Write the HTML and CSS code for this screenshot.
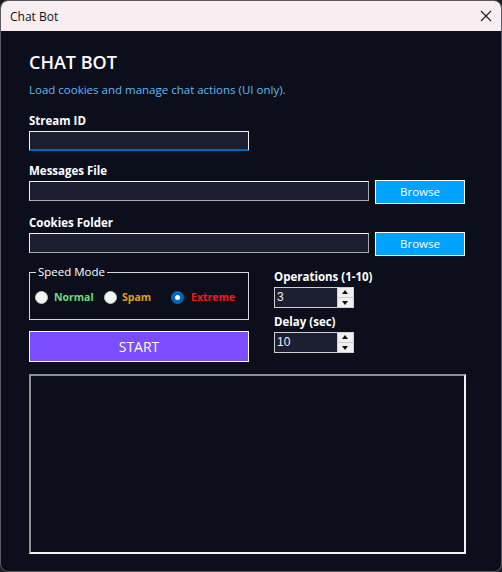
FILE: index.html
```html
<!DOCTYPE html>
<html>
<head>
<meta charset="utf-8">
<link rel="stylesheet" href="styles.css">
</head>
<body>
<div class="window">
  <div class="titlebar">
    <span class="title">Chat Bot</span>
    <svg class="close" width="12" height="12" viewBox="0 0 12 12"><path d="M1 1 L11 11 M11 1 L1 11" stroke="#1a1a1a" stroke-width="1.1" fill="none"/></svg>
  </div>
  <div class="content">
    <h1 class="heading">CHAT BOT</h1>
    <p class="subtitle">Load cookies and manage chat actions (UI only).</p>

    <label class="label first">Stream ID</label>
    <div class="input stream"></div>

    <label class="label">Messages File</label>
    <div class="row">
      <div class="input wide"></div>
      <div class="btn-browse">Browse</div>
    </div>

    <label class="label after-row">Cookies Folder</label>
    <div class="row">
      <div class="input wide"></div>
      <div class="btn-browse">Browse</div>
    </div>

    <div class="lower">
      <div class="leftcol">
        <fieldset class="group">
          <legend>Speed Mode</legend>
          <div class="radios">
            <div class="radio r1"><span class="dot"></span><span class="rl normal">Normal</span></div>
            <div class="radio r2"><span class="dot"></span><span class="rl spam">Spam</span></div>
            <div class="radio r3"><span class="dot on"></span><span class="rl extreme">Extreme</span></div>
          </div>
        </fieldset>
        <div class="start">START</div>
      </div>
      <div class="rightcol">
        <label class="label small">Operations (1-10)</label>
        <div class="spin"><span class="val">3</span><span class="arrows"><span class="up"></span><span class="down"></span></span></div>
        <label class="label small second">Delay (sec)</label>
        <div class="spin"><span class="val">10</span><span class="arrows"><span class="up"></span><span class="down"></span></span></div>
      </div>
    </div>

    <div class="log"></div>
  </div>
</div>
</body>
</html>
```
FILE: styles.css
```css
* { box-sizing: border-box; }
html, body { margin: 0; padding: 0; }
body {
  background: #1d1f26;
  width: 502px;
  height: 572px;
  overflow: hidden;
  font-family: "Open Sans", "Noto Sans", sans-serif;
}
.window {
  width: 502px;
  height: 572px;
  border: 1px solid #5a5a60;
  border-radius: 8px;
  overflow: hidden;
  background: #0c0f1b;
  display: flex;
  flex-direction: column;
}
.titlebar {
  height: 30px;
  background: #f8eef2;
  display: flex;
  align-items: center;
  justify-content: space-between;
  padding: 0 9px 0 9px;
  flex: none;
}
.title {
  font-size: 12px;
  color: #111;
}
.close { display: block; }
.content {
  flex: 1;
  padding: 19px 0 0 28px;
  display: flex;
  flex-direction: column;
  align-items: flex-start;
}
.heading {
  margin: 0;
  font-size: 18px;
  line-height: 24px;
  font-weight: 600;
  color: #ffffff;
}
.subtitle {
  margin: 8px 0 0 0;
  font-size: 11.5px;
  line-height: 16px;
  color: #62b9f5;
}
.label {
  display: block;
  font-size: 11.5px;
  line-height: 16px;
  font-weight: 700;
  color: #ffffff;
  margin-top: 11px;
  margin-bottom: 2px;
  padding-top: 1px;
}
.label.first { margin-top: 14px; }
.label.after-row { margin-top: 10px; }
.input {
  height: 20px;
  background: #1c1f31;
  border: 1px solid #f2f2f2;
  border-right-color: #a9a9a9;
  border-bottom-color: #a9a9a9;
}
.input.stream {
  width: 220px;
  border-bottom: 2px solid #0067c0;
  border-right-color: #f2f2f2;
}
.row {
  display: flex;
  align-items: flex-start;
  gap: 6px;
  margin-top: -1px;
}
.input.wide { width: 340px; margin-top: 1px; }
.btn-browse {
  width: 90px;
  height: 24px;
  background: #00a2ff;
  border: 1px solid #ffffff;
  color: #ffffff;
  font-size: 11.5px;
  line-height: 22px;
  text-align: center;
}
.lower {
  display: flex;
  gap: 25px;
  margin-top: 9px;
}
.leftcol { width: 220px; display: flex; flex-direction: column; }
.group {
  margin: 0;
  padding: 10px 5px 14px 5px;
  border: 1px solid #d8d8d8;
  min-width: 0;
}
.group legend {
  font-size: 11.5px;
  line-height: 14px;
  color: #ffffff;
  padding: 0 2px;
  margin-left: 1px;
}
.radios { display: flex; height: 16px; align-items: center; }
.radio { display: flex; align-items: center; gap: 6px; }
.r1 { width: 69px; }
.r2 { width: 67px; gap: 5px; }
.r3 { gap: 7px; }
.dot {
  width: 13px;
  height: 13px;
  border-radius: 50%;
  background: #f4f4f4;
  border: 1px solid #c8c8c8;
  flex: none;
}
.dot.on {
  background: #0067c0;
  border-color: #0067c0;
  position: relative;
}
.dot.on::after {
  content: "";
  position: absolute;
  left: 3px;
  top: 3px;
  width: 5px;
  height: 5px;
  border-radius: 50%;
  background: #ffffff;
}
.rl { font-size: 10.5px; font-weight: 700; line-height: 16px; }
.normal { color: #6fdc7c; }
.spam { color: #e0a01e; }
.extreme { color: #ff1414; }
.start {
  margin-top: 11px;
  height: 31px;
  background: #7c4dff;
  border: 1px solid #ffffff;
  color: #ffffff;
  font-size: 14px;
  line-height: 29px;
  text-align: center;
}
.rightcol { display: flex; flex-direction: column; padding-top: 3px; }
.label.small { margin-top: 0; }
.label.second { margin-top: 5px; }
.spin {
  width: 80px;
  height: 21px;
  background: #1c1f31;
  border: 1px solid #cfcfcf;
  display: flex;
  justify-content: space-between;
}
.val {
  color: #e8ecff;
  font-size: 12px;
  line-height: 19px;
  padding-left: 2px;
  font-family: "Liberation Sans", sans-serif;
}
.arrows {
  width: 16px;
  display: flex;
  flex-direction: column;
  gap: 1px;
  background: #cfcfcf;
  border-left: 1px solid #cfcfcf;
}
.up, .down {
  flex: 1;
  background: #f0f0f0;
  position: relative;
}
.up::after, .down::after {
  content: "";
  position: absolute;
  left: 4px;
  width: 0;
  height: 0;
  border-left: 3.5px solid transparent;
  border-right: 3.5px solid transparent;
}
.up::after { top: 2px; border-bottom: 4px solid #111; }
.down::after { top: 3px; border-top: 4px solid #111; }
.log {
  margin-top: 12px;
  width: 437px;
  height: 180px;
  background: #0c0f1b;
  border: 2px solid;
  border-top-color: #8f8f8f;
  border-left-color: #8f8f8f;
  border-bottom-color: #f4f4f4;
  border-right-color: #f4f4f4;
}
```
